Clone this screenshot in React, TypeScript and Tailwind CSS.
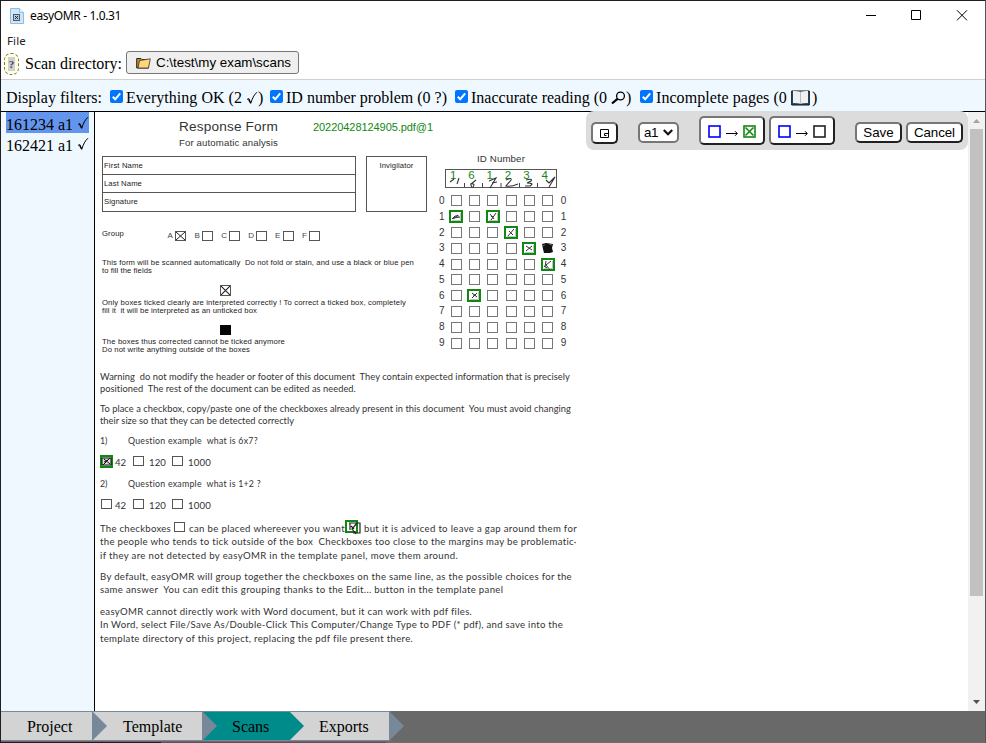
import { useLayoutEffect, useRef, useState } from "react";
import type { ReactNode } from "react";

/* Text whose tracking is adjusted so that it fills exactly `w` pixels. */
function Fit({ w, children, className = "" }: { w: number; children: string; className?: string }) {
  const ref = useRef<HTMLSpanElement>(null);
  const [spacing, setSpacing] = useState(0);
  useLayoutEffect(() => {
    if (ref.current) {
      const natural = ref.current.getBoundingClientRect().width;
      setSpacing((w - natural) / children.length);
    }
  }, []);
  return (
    <span className={`block shrink-0 whitespace-pre ${className}`} style={{ width: w }}>
      <span ref={ref} style={{ letterSpacing: spacing }}>
        {children}
      </span>
    </span>
  );
}

function Check() {
  return (
    <svg className="inline-block h-[14px] w-[12px]" viewBox="0 0 12 14" fill="none" stroke="currentColor">
      <path d="M1 8.4 L2.8 7.6 L4.8 12.2 C6.2 7.5 8 3.8 11 1.2" strokeWidth="1" />
      <path d="M2.6 8.4 L4.6 12.2" strokeWidth="1.2" />
    </svg>
  );
}

function Tick({ children, w }: { children: ReactNode; w: string }) {
  return (
    <label className={`flex h-[21px] shrink-0 items-center gap-[3px] whitespace-pre ${w}`}>
      <svg className="-mt-[3px] h-[13px] w-[13px] shrink-0" viewBox="0 0 13 13">
        <rect width="13" height="13" rx="2" fill="#0075ff" />
        <path d="M2.8 6.8 L5.2 9.3 L10.2 3.4" fill="none" stroke="#fff" strokeWidth="2" />
      </svg>
      <span className="flex items-center">{children}</span>
    </label>
  );
}

function Box({ crossed = false, className = "" }: { crossed?: boolean; className?: string }) {
  return (
    <span className={`block h-[10px] w-[11px] shrink-0 border border-[#555] ${className}`}>
      {crossed && (
        <svg className="h-full w-full" viewBox="0 0 9 8" preserveAspectRatio="none" stroke="#222">
          <path d="M0 0 L9 8 M9 0 L0 8" />
        </svg>
      )}
    </span>
  );
}

const scribbles: Record<string, string> = {
  "1-0": "M3 9 L6 6 L10 6 M4 9 L9 5 M5 8 L11 7",
  "1-2": "M4 4 L8 9 M10 3 L5 10 M5 6 L7 7",
  "2-3": "M5 5 L9 9 M10 3 L4 10",
  "3-4": "M4 4 L10 8 M10 4 L4 9",
  "4-5": "M5 3 L4 9 M10 3 L5 7 L9 12 M3 8 L6 10",
  "6-1": "M5 4 L10 8 M10 4 L5 9 M6 6 L9 6",
};

function Marked({ path }: { path: string }) {
  return (
    <span className="block h-[13px] w-[14px] shrink-0 border-2 border-[#118811] bg-white">
      <svg className="-m-[2px] h-[13px] w-[14px] overflow-visible" viewBox="0 0 14 13" fill="none" stroke="#333">
        <path d={path} />
        <path d="M3 10.5 H11.5 V3" strokeWidth=".6" stroke="#999" />
      </svg>
    </span>
  );
}

function IdGrid() {
  return (
    <div className="w-[140px] pt-[40px] font-['Liberation_Sans',sans-serif]">
      <div className="flex h-[13px] items-center justify-center pr-[8px] text-[9.7px] text-[#333]">
        <Fit w={48}>ID Number</Fit>
      </div>
      <div className="relative mt-[4px] ml-[10px] h-[19px] w-[112px] border border-[#555]">
        <div className="-ml-[2px] flex h-[10px] items-center text-[11.5px] text-[#118811]">
          {["1", "6", "1", "2", "3", "4"].map((d, i) => (
            <span key={i} className="w-[18.3px] text-center">
              {d}
            </span>
          ))}
        </div>
        <svg className="absolute -top-px -left-px h-[19px] w-[112px] overflow-visible" viewBox="0 0 112 19" fill="none" stroke="#333">
          <path d="M5 13 L9 10 M14 9 L12 15 M31 11 L26 15 Q26 19 28 18 Q31 14 25 15 M44 12 L51 9 L45 19 M47 14 L52 13 M61 11 Q67 8 66 11 L61 17 Q66 18 73 15 M81 11 Q88 9 86 12 L82 14 Q90 14 85 17 L80 17 M101 11 L104 14 L110 8 L104 18" strokeWidth="1.1" />
          <path d="M19.5 14 V18 M37.5 14 V18 M56 14 V18 M74.5 14 V18 M92.5 14 V18" stroke="#444" />
        </svg>
      </div>
      <div className="mt-[5px]">
        {Array.from({ length: 10 }, (_, r) => (
          <div key={r} className="flex h-[15.8px] items-center text-[10px] text-[#333]">
            <span className="w-[12px] pl-[4px]">{r}</span>
            {Array.from({ length: 6 }, (_, c) => {
              const mark = scribbles[`${r}-${c}`];
              return (
                <span key={c} className="flex w-[18.3px] justify-center">
                  {mark ? (
                    <Marked path={mark} />
                  ) : r === 3 && c === 5 ? (
                    <svg className="h-[11px] w-[11px]" viewBox="0 0 11 11">
                      <path d="M0 1 L4 0 L11 1 L10 5 L11 9 L8 10 L2 10 L1 6 Z" fill="#111" />
                      <path d="M0 3 L3 2 M7 1 L10 2" stroke="#888" strokeWidth=".7" />
                    </svg>
                  ) : (
                    <Box className="h-[11px] border-[#777]" />
                  )}
                </span>
              );
            })}
            <span className="w-[12px] pl-[4px]">{r}</span>
          </div>
        ))}
      </div>
    </div>
  );
}

function FormHeader() {
  return (
    <div className="w-[340px] shrink-0 pl-[7px] font-['Liberation_Sans',sans-serif] text-[7.7px] leading-[8px] text-[#222] [&_p]:h-[8px]">
      <div className="flex h-[23px] items-center pt-[7px] pl-[77px]">
        <Fit w={99} className="text-[13.6px] leading-4 text-[#333]">Response Form</Fit>
        <Fit w={120} className="ml-[35px] text-[11px] leading-4 text-[#118811]">20220428124905.pdf@1</Fit>
      </div>
      <div className="h-[21px] pl-[77px]">
        <Fit w={99} className="text-[9.6px] leading-[15px] text-[#333]">For automatic analysis</Fit>
      </div>
      <div className="flex gap-[10px]">
        <div className="grid h-[56px] w-[254px] grid-rows-3 divide-y divide-[#555] border border-[#555]">
          {[["First Name", 39], ["Last Name", 38], ["Signature", 34]].map(([t, w]) => (
            <div key={t} className="flex items-center pl-px">
              <Fit w={w as number}>{t as string}</Fit>
            </div>
          ))}
        </div>
        <div className="flex h-[56px] w-[61px] justify-center border border-[#555] pt-[5px]">
          <Fit w={34}>Invigilator</Fit>
        </div>
      </div>
      <div className="mt-[17px] flex h-[13px] items-center">
        <Fit w={22} className="-mt-[3px] mr-[43.5px]">Group</Fit>
        {["A", "B", "C", "D", "E", "F"].map((g) => (
          <span key={g} className="flex w-[26.9px] shrink-0 items-center gap-[1.5px]">
            <span className="w-[6px] text-[8px] text-[#444]">{g}</span>
            <Box crossed={g === "A"} />
          </span>
        ))}
      </div>
      <div className="mt-[17px]">
        <p><Fit w={312}>This form will be scanned automatically  Do not fold or stain, and use a black or blue pen</Fit></p>
        <p><Fit w={50}>to fill the fields</Fit></p>
      </div>
      <Box crossed className="mt-[10px] ml-[118px] h-[11px]" />
      <div className="mt-[3px]">
        <p><Fit w={304}>Only boxes ticked clearly are interpreted correctly ! To correct a ticked box, completely</Fit></p>
        <p><Fit w={155}>fill it  it will be interpreted as an unticked box</Fit></p>
      </div>
      <div className="mt-[10px] ml-[118px] h-[10px] w-[11px] bg-[#050505]" />
      <div className="mt-[3px]">
        <p><Fit w={183}>The boxes thus corrected cannot be ticked anymore</Fit></p>
        <p><Fit w={148}>Do not write anything outside of the boxes</Fit></p>
      </div>
    </div>
  );
}

function Options({ picked = false }: { picked?: boolean }) {
  return (
    <div className="flex h-[14px] items-center">
      <span className="flex w-[15px]">
        {picked ? (
          <span className="block h-[13px] w-[13px] border-2 border-[#118811] bg-[#ddd]">
            <svg className="-m-px h-[11px] w-[11px]" viewBox="0 0 11 11" fill="none" stroke="#111">
              <path d="M1 2 H10 V9 H1 Z M3 3 L9 8 M9 2 L2 9 M3 6 L7 4" />
            </svg>
          </span>
        ) : (
          <Box className="ml-px border-[#333]" />
        )}
      </span>
      <Fit w={11} className="mt-[3px]">42</Fit>
      <Box className="ml-[7px] border-[#333]" />
      <Fit w={17} className="mt-[3px] ml-[5px]">120</Fit>
      <Box className="ml-[6px] border-[#333]" />
      <Fit w={23} className="mt-[3px] ml-[5px]">1000</Fit>
    </div>
  );
}

function Row({ w, children, className = "" }: { w: number; children: string; className?: string }) {
  return (
    <div className={className}>
      <Fit w={w}>{children}</Fit>
    </div>
  );
}

function Question({ n, w, children }: { n: string; w: number; children: string }) {
  return (
    <div className="flex">
      <span className="w-[28px] text-[8.8px]">{n}</span>
      <Fit w={w} className="text-[8.8px]">{children}</Fit>
    </div>
  );
}

function Body() {
  return (
    <div className="pl-[5px] font-[Lato,'Open_Sans',sans-serif] text-[9.6px] leading-[12px] text-[#333]">
      <div className="text-[9.3px]">
        <Row w={470}>Warning  do not modify the header or footer of this document  They contain expected information that is precisely</Row>
        <Row w={256}>positioned  The rest of the document can be edited as needed.</Row>
        <Row w={471} className="mt-[8px]">To place a checkbox, copy/paste one of the checkboxes already present in this document  You must avoid changing</Row>
        <Row w={194}>their size so that they can be detected correctly</Row>
      </div>
      <div className="mt-[8px]"><Question n="1)" w={130}>Question example  what is 6x7?</Question></div>
      <div className="mt-[7px]"><Options picked /></div>
      <div className="mt-[10px]"><Question n="2)" w={133}>Question example  what is 1+2 ?</Question></div>
      <div className="mt-[7px]"><Options /></div>
      <div className="mt-[10.5px] leading-[13.7px]">
        <div className="flex h-[13.7px] items-center">
          <Fit w={71}>The checkboxes</Fit>
          <Box className="mr-[4px] ml-[3px] -mt-[3px] border-[#333]" />
          <Fit w={156}>can be placed whereever you want</Fit>
          <span className="-mt-[4px] flex w-[19px]">
            <span className="block h-[13px] w-[13px] border-2 border-[#118811]">
              <svg className="-m-[2px] h-[15px] w-[16px] overflow-visible" viewBox="0 0 16 15" fill="none" stroke="#222">
                <path d="M4 3 H15 V13 H8 M5 3 V10 M12 3 L7 9 L11 14 M6 6 L9 9" strokeWidth="1.2" />
              </svg>
            </span>
          </span>
          <Fit w={213}>but it is adviced to leave a gap around them for</Fit>
        </div>
        <Row w={477}>the people who tends to tick outside of the box  Checkboxes too close to the margins may be problematic·</Row>
        <Row w={358}>if they are not detected by easyOMR in the template panel, move them around.</Row>
        <Row w={472} className="mt-[7px]">By default, easyOMR will group together the checkboxes on the same line, as the possible choices for the</Row>
        <Row w={403}>same answer  You can edit this grouping thanks to the Edit... button in the template panel</Row>
        <Row w={372} className="mt-[7.5px]">easyOMR cannot directly work with Word document, but it can work with pdf files.</Row>
        <Row w={463}>In Word, select File/Save As/Double-Click This Computer/Change Type to PDF (* pdf), and save into the</Row>
        <Row w={313}>template directory of this project, replacing the pdf file present there.</Row>
      </div>
    </div>
  );
}

function Square({ color, crossed = false }: { color: string; crossed?: boolean }) {
  return (
    <svg className="h-[13px] w-[13px]" viewBox="0 0 13 13" fill="none" stroke={color}>
      <rect x="1" y="1" width="11" height="11" strokeWidth="1.6" />
      {crossed && <path d="M2.5 2.5 L10.5 10.5 M10.5 2.5 L2.5 10.5" strokeWidth="1.6" />}
    </svg>
  );
}

function Arrow() {
  return (
    <svg className="mt-[4px] h-[7px] w-[12px]" viewBox="0 0 12 7" fill="none" stroke="#000">
      <path d="M0 3.5 H11 M9 1.2 L11.3 3.5 L9 5.8" />
    </svg>
  );
}

const outset = "border-2 border-t-[#767676] border-l-[#767676] border-r-[#212121] border-b-[#212121] bg-white rounded-[5px] flex shrink-0 items-center justify-center";

function Toolbar() {
  return (
    <div className="absolute -top-px left-[491px] flex h-[39px] w-[382px] items-center rounded-lg bg-[#dcdcdc] pl-[5px] font-['Liberation_Sans',sans-serif] text-[13.33px] text-black">
      <button className={`${outset} mt-[5px] h-[22px] w-[27px]`}>
        <svg className="h-[9px] w-[9px]" viewBox="0 0 9 9" fill="none" stroke="#000">
          <path d="M.5 .5 H8.5 V8.5 H.5 Z M8 4.5 H4.5 V6.5 H6.5" />
        </svg>
      </button>
      <button className="mt-[4px] ml-[20px] flex h-[21px] w-[41px] items-center gap-[5px] rounded-[5px] border-2 border-[#767676] bg-white pl-[4px]">
        <Fit w={14}>a1</Fit>
        <svg className="h-[7px] w-[10px]" viewBox="0 0 10 7" fill="none" stroke="#111" strokeWidth="2.2">
          <path d="M.8 1 L5 5.2 L9.2 1" />
        </svg>
      </button>
      <button className={`${outset} ml-[20px] h-[29px] w-[66px] gap-[5px] pt-[2px]`}>
        <Square color="#0000ff" />
        <Arrow />
        <Square color="#118811" crossed />
      </button>
      <button className={`${outset} ml-[4px] h-[29px] w-[66px] gap-[5px] pt-[2px]`}>
        <Square color="#0000ff" />
        <Arrow />
        <Square color="#222" />
      </button>
      <button className={`${outset} mt-[4px] ml-[20px] h-[21px] w-[47px]`}>Save</button>
      <button className={`${outset} mt-[4px] ml-[4px] h-[21px] w-[57px]`}>
        <Fit w={41}>Cancel</Fit>
      </button>
    </div>
  );
}

function Tab({ label, className, active = false }: { label: string; className: string; active?: boolean }) {
  return (
    <div
      className={`relative flex h-[28px] shrink-0 items-center pt-[2px] ${active ? "bg-[#008b8b]" : "border-r border-[#778899] bg-[#d3d3d3]"} ${className}`}
    >
      {label}
      <svg
        className={`absolute top-0 z-10 h-[28px] w-[14px] ${active ? "-right-[14px]" : "-right-[15px]"}`}
        viewBox="0 0 14 28"
      >
        <path d="M0 0 L14 14 L0 28 Z" fill={active ? "#008b8b" : "#778899"} />
      </svg>
    </div>
  );
}

export default function App() {
  return (
    <div className="flex h-[743px] w-[986px] flex-col overflow-hidden border-t border-r border-l border-t-[#202024] border-r-[#555] border-l-[#202024] bg-white font-['Liberation_Serif',serif] text-[16px] leading-[20px] text-black">
      <header className="flex h-[29px] shrink-0 items-center pl-[9px] font-['Noto_Sans','Open_Sans',sans-serif] text-[12px]">
        <svg className="h-[16px] w-[14px]" viewBox="0 0 14 16">
          <path d="M.5 .5 H9.5 L13.5 4.5 V15.5 H.5 Z" fill="#cce6fa" stroke="#8fbde3" />
          <path d="M9.5 .5 V4.5 H13.5" fill="#eaf5ff" stroke="#8fbde3" />
          <rect x="3.5" y="6.5" width="6" height="6" fill="#b9cddd" stroke="#556" />
          <path d="M5 8 L8 11 M8 8 L5 11" stroke="#223" />
        </svg>
        <Fit w={91} className="ml-[6px]">easyOMR - 1.0.31</Fit>
        <div className="ml-auto flex items-center pr-[17px]">
          <svg className="h-[11px] w-[102px]" viewBox="0 0 102 11" fill="none" stroke="#000">
            <path d="M0 5.5 H10 M45.5 .5 H54.5 V9.5 H45.5 Z M91 .3 L101 10.3 M101 .3 L91 10.3" />
          </svg>
        </div>
      </header>
      <nav className="h-[21px] shrink-0 pl-[6px] font-['Noto_Sans','Open_Sans',sans-serif] text-[11.5px] leading-[21px] text-[#222]">
        <Fit w={19}>File</Fit>
      </nav>
      <section className="flex h-[29px] shrink-0 items-start border-b border-[#d0d0d0] pl-[3px]">
        <span className="mt-[2px] flex h-[22px] w-[15px] items-center justify-center rounded-[7px] border border-dashed border-[#77775a] bg-[#ffffdd]">
          <span className="flex h-[14px] w-[7px] items-center justify-center bg-[#cfcfd6] text-[11px] font-bold text-[#444]">?</span>
        </span>
        <Fit w={97} className="mt-[3px] ml-[6px]">Scan directory:</Fit>
        <button className="ml-[4px] flex h-[23px] w-[173px] items-center rounded-[3px] border border-[#767676] bg-[#efefef] pl-[9px] pt-px font-['Liberation_Sans',sans-serif] text-[13.33px]">
          <svg className="h-[12px] w-[15px]" viewBox="0 0 15 12" strokeLinejoin="round">
            <path d="M.7 11 V1.5 H5 L6 2.5 H12.5 V11 Z" fill="#c98d28" stroke="#222" />
            <path d="M2 11 L3.5 3.5 L14.3 1.8 L12.5 11 Z" fill="#ffd575" stroke="#333" strokeWidth=".8" />
          </svg>
          <Fit w={135} className="ml-[5px]">{"C:\\test\\my exam\\scans"}</Fit>
        </button>
      </section>
      <section className="flex h-[32px] shrink-0 items-center border-b border-black bg-[#f0f8ff] pt-[4px] pl-[5px]">
        <Fit w={96} className="mr-[8px]">Display filters:</Fit>
        <Tick w="w-[160px]">
          <Fit w={120}>Everything OK (2 </Fit>
          <Check />
          <span>)</span>
        </Tick>
        <Tick w="w-[185px]">
          <Fit w={161}>ID number problem (0 ?)</Fit>
        </Tick>
        <Tick w="w-[185px]">
          <Fit w={140}>Inaccurate reading (0 </Fit>
          <svg className="h-[14px] w-[15px]" viewBox="0 0 15 14" fill="none" stroke="#000">
            <circle cx="9.5" cy="5" r="3.9" strokeWidth="1.3" />
            <path d="M6.5 7.8 L1 12.5" strokeWidth="2.2" />
          </svg>
          <span>)</span>
        </Tick>
        <Tick w="w-[180px]">
          <Fit w={135}>Incomplete pages (0 </Fit>
          <svg className="h-[16px] w-[19px]" viewBox="0 0 19 16">
            <path d="M.7 1 H18.3 V15 H.7 Z" fill="#26527c" stroke="#111" />
            <path d="M2 1 Q6 .8 9.5 1.8 Q13 .8 17 1 V13 Q13 12.6 9.5 13.8 Q6 12.6 2 13 Z" fill="#f0f0f0" />
            <path d="M9.5 2 V13.5" stroke="#bbb" />
          </svg>
          <span className="ml-[2px]">)</span>
        </Tick>
      </section>
      <main className="flex h-[599px] shrink-0">
        <aside className="w-[94px] shrink-0 border-r border-black bg-[#f0f8ff] pl-[5px]">
          {["161234 a1", "162421 a1"].map((id, i) => (
            <div key={id} className={`flex h-[21px] w-[83px] items-center ${i === 0 ? "bg-[#6495ed]" : ""}`}>
              <span className="mt-[4px] w-[71px] whitespace-pre">{id}</span>
              <Check />
            </div>
          ))}
        </aside>
        <div className="relative w-[873px] shrink-0">
          <div className="flex h-[259px]">
            <FormHeader />
            <IdGrid />
          </div>
          <Body />
          <Toolbar />
        </div>
        <div className="flex w-[17px] shrink-0 flex-col items-center bg-[#f1f1f1]">
          <svg className="h-[17px] w-[7px] shrink-0" viewBox="0 0 7 17">
            <path d="M0 11 L3.5 7 L7 11 Z" fill="#a3a3a3" />
          </svg>
          <div className="h-[467px] w-[13px] bg-[#c1c1c1]" />
          <svg className="mt-auto h-[17px] w-[7px] shrink-0" viewBox="0 0 7 17">
            <path d="M0 6 L3.5 10 L7 6 Z" fill="#505050" />
          </svg>
        </div>
      </main>
      <footer className="h-[31px] shrink-0 bg-[#696969]">
        <div className="flex w-[389px] border-y border-[#778899]">
          <Tab label="Project" className="w-[92px] pl-[26px]" />
          <Tab label="Template" className="w-[110px] pl-[30px]" />
          <Tab label="Scans" className="w-[87px] pl-[29px]" active />
          <Tab label="Exports" className="w-[100px] pl-[29px]" />
        </div>
      </footer>
      <div className="flex h-px shrink-0 bg-[#707070]">
        <span className="w-[160px] bg-[#231a20]" />
        <span className="w-[225px] bg-[#5b5160]" />
      </div>
    </div>
  );
}
